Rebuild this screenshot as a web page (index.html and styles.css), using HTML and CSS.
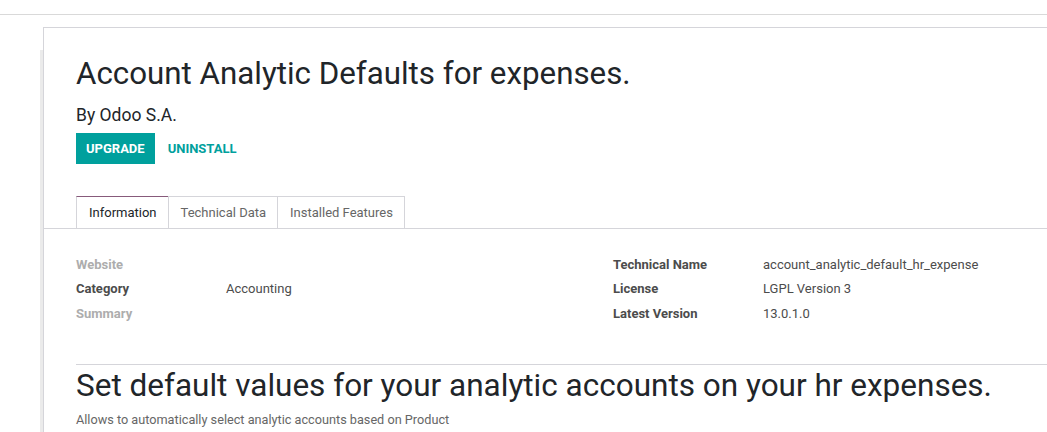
FILE: index.html
```html
<!DOCTYPE html>
<html lang="en">
<head>
    <meta charset="UTF-8">
    <title>Account Analytic Defaults for expenses.</title>
    <link rel="stylesheet" href="styles.css">
</head>
<body>
    <div class="topbar"></div>
    <div class="wrap">
        <div class="shadow"></div>
        <div class="sheet">
            <h1 class="title">Account Analytic Defaults for expenses.</h1>
            <h3 class="author">By Odoo S.A.</h3>
            <div class="actions">
                <button class="btn-primary">Upgrade</button>
                <button class="btn-link">Uninstall</button>
            </div>

            <ul class="tabs">
                <li class="tab active">Information</li>
                <li class="tab">Technical Data</li>
                <li class="tab">Installed Features</li>
            </ul>

            <div class="groups">
                <div class="group">
                    <div class="label muted">Website</div><div class="value"></div>
                    <div class="label">Category</div><div class="value">Accounting</div>
                    <div class="label muted">Summary</div><div class="value"></div>
                </div>
                <div class="group">
                    <div class="label">Technical Name</div><div class="value">account_analytic_default_hr_expense</div>
                    <div class="label">License</div><div class="value">LGPL Version 3</div>
                    <div class="label">Latest Version</div><div class="value">13.0.1.0</div>
                </div>
            </div>

            <div class="description">
                <h2>Set default values for your analytic accounts on your hr expenses.</h2>
                <p>Allows to automatically select analytic accounts based on Product</p>
            </div>
        </div>
    </div>
</body>
</html>
```

FILE: styles.css
```css
body {
    margin: 0;
    font-family: Roboto, "Liberation Sans", sans-serif;
    font-size: 13px;
    color: #4c4c4c;
    background: #fff;
    overflow: hidden;
}
.topbar {
    height: 14px;
    border-bottom: 1px solid #d9d9d9;
}
.wrap {
    display: flex;
    padding-top: 12px;
    padding-left: 40px;
}
.shadow {
    flex-shrink: 0;
    width: 3px;
    margin-top: 23px;
    background: #ebebeb;
}
.sheet {
    flex: 1;
    min-width: 1100px;
    border-top: 1px solid #d5d5da;
    border-left: 1px solid #d5d5da;
    padding: 0 0 40px 32px;
}
.title {
    margin: 28px 0 0;
    font-size: 31.3px;
    font-weight: 400;
    line-height: 36px;
    color: #212529;
}
.author {
    margin: 12px 0 0;
    font-size: 17.5px;
    font-weight: 400;
    line-height: 22px;
    color: #212529;
}
.actions {
    display: flex;
    align-items: center;
    margin-top: 7px;
}
.actions button {
    font-family: inherit;
    font-size: 13px;
    font-weight: 700;
    text-transform: uppercase;
    border: none;
    cursor: pointer;
}
.btn-primary {
    background: #00a09d;
    color: #fff;
    height: 31px;
    padding: 0 10px;
}
.btn-link {
    background: none;
    color: #00a09d;
    padding: 0 13px;
}
.tabs {
    display: flex;
    list-style: none;
    margin: 32px 0 0 -32px;
    padding: 0 0 0 32px;
    border-bottom: 1px solid #d5d5da;
}
.tab {
    height: 31px;
    line-height: 31px;
    padding: 0 11px 0 12px;
    border: 1px solid #d5d5da;
    border-bottom: none;
    margin-left: -1px;
    color: #666;
}
.tab:first-child {
    margin-left: 0;
}
.tab.active {
    border-top-color: #875a7b;
    color: #212529;
    margin-bottom: -1px;
    background: #fff;
}
.groups {
    display: grid;
    grid-template-columns: 537px 537px;
    margin-top: 23px;
}
.group {
    display: grid;
    grid-template-columns: 150px 1fr;
    grid-auto-rows: 24.5px;
    align-items: center;
}
.label {
    font-weight: 700;
    color: #4c4c4c;
}
.label.muted {
    color: #adadad;
}
.description {
    margin-top: 38px;
    border-top: 1px solid #d5d5da;
}
.description h2 {
    margin: 3px 0 0;
    font-size: 31.5px;
    font-weight: 400;
    line-height: 36px;
    color: #212529;
}
.description p {
    margin: 8px 0 0;
    font-size: 12.7px;
    color: #666;
}
```
